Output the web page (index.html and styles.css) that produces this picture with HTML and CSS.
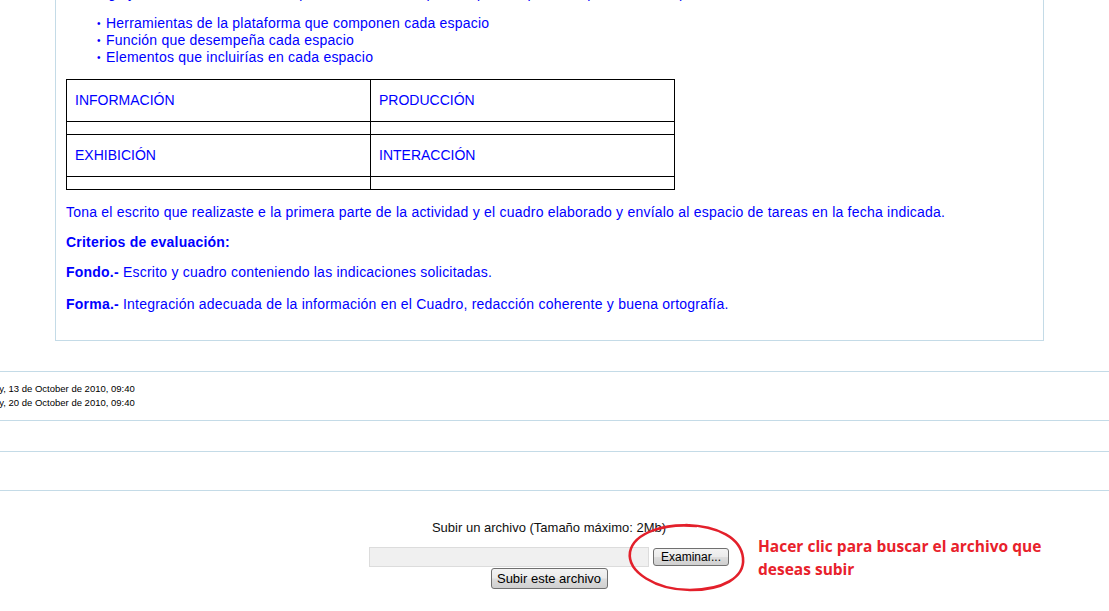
FILE: index.html
```html
<!DOCTYPE html>
<html lang="es">
<head>
<meta charset="utf-8">
<title>Tarea</title>
<link rel="stylesheet" href="styles.css">
</head>
<body>
<div class="box">
  <p class="intro">Investiga y elabora un escrito en el que describas los espacios que componen la plataforma, especificando:</p>
  <ul class="list">
    <li>Herramientas de la plataforma que componen cada espacio</li>
    <li>Función que desempeña cada espacio</li>
    <li>Elementos que incluirías en cada espacio</li>
  </ul>
  <table class="grid">
    <colgroup><col class="c1"><col class="c2"></colgroup>
    <tr class="tall"><td>INFORMACIÓN</td><td>PRODUCCIÓN</td></tr>
    <tr class="short"><td></td><td></td></tr>
    <tr class="tall"><td>EXHIBICIÓN</td><td>INTERACCIÓN</td></tr>
    <tr class="short"><td></td><td></td></tr>
  </table>
  <p>Tona el escrito que realizaste e la primera parte de la actividad y el cuadro elaborado y envíalo al espacio de tareas en la fecha indicada.</p>
  <p><b>Criterios de evaluación:</b></p>
  <p class="fondo"><b>Fondo.-</b> Escrito y cuadro conteniendo las indicaciones solicitadas.</p>
  <p class="last"><b>Forma.-</b> Integración adecuada de la información en el Cuadro, redacción coherente y buena ortografía.</p>
</div>

<div class="rows">
  <div class="row dates">
    <div class="date">Wednesday, 13 de October de 2010, 09:40</div>
    <div class="date">Wednesday, 20 de October de 2010, 09:40</div>
  </div>
  <div class="row r2"></div>
  <div class="row r3"></div>
</div>

<div class="upload">
  <div class="label">Subir un archivo (Tamaño máximo: 2Mb)</div>
  <div class="filerow">
    <span class="field"></span>
    <button class="btn browse" type="button">Examinar...</button>
  </div>
  <button class="btn submit" type="button">Subir este archivo</button>
</div>

<div class="note">
  <svg class="ring" width="124" height="72" viewBox="0 0 124 72">
    <path d="M70 4 C 40 1, 8 10, 4 30 C 1 50, 30 68, 64 68 C 96 68, 119 56, 117 36 C 115 16, 92 4, 60 3" fill="none" stroke="#e3202b" stroke-width="2.6" stroke-linecap="round"/>
  </svg>
  <p class="hint">Hacer clic para buscar el archivo que<br>deseas subir</p>
</div>
</body>
</html>
```

FILE: styles.css
```css
html, body {
  margin: 0;
  padding: 0;
  background: #ffffff;
  overflow: hidden;
}

body {
  font-family: "Liberation Sans", Arial, sans-serif;
  width: 1109px;
  height: 611px;
  position: relative;
}

.box {
  box-sizing: border-box;
  width: 989px;
  margin-left: 55px;
  border: 1px solid #c4dbe7;
  border-top: 0;
  padding: 0 10px 27px 10px;
  color: #0000ff;
  font-size: 14px;
  line-height: 17px;
  letter-spacing: 0.22px;
}

.box p {
  margin: 0 0 13px;
}

.box p.intro {
  margin: -15px 0 13px;
}

.box p.fondo {
  margin-bottom: 15px;
}

.box p.last {
  margin-bottom: 0;
}

.list {
  list-style: none;
  margin: 0 0 13px;
  padding-left: 31px;
}

.list li::before {
  content: "\2022";
  display: inline-block;
  width: 9px;
  font-size: 10px;
  vertical-align: top;
  line-height: 17px;
}

.grid {
  border-collapse: collapse;
  table-layout: fixed;
  width: 608px;
  margin: 0 0 14px;
  letter-spacing: 0;
}

.grid .c1 { width: 304px; }
.grid .c2 { width: 304px; }

.grid td {
  border: 1px solid #000;
  padding: 0 8px;
  color: #0000ff;
}

.grid .tall td {
  height: 41px;
}

.grid .short td {
  height: 12px;
}

.rows {
  margin-top: 30px;
  border-bottom: 1px solid #c4dbe7;
}

.row {
  border-top: 1px solid #c4dbe7;
}

.dates {
  padding: 10px 0 10px;
  font-size: 9.5px;
  line-height: 14px;
  color: #000;
}

.date {
  margin-left: -46px;
  white-space: nowrap;
}

.r2 { height: 30px; }
.r3 { height: 38px; }

.upload {
  padding: 29px 11px 0 0;
  display: flex;
  flex-direction: column;
  align-items: center;
  font-size: 13px;
  color: #111;
}

.label {
  line-height: 16px;
}

.filerow {
  display: flex;
  align-items: center;
  gap: 4px;
  margin-top: 11px;
}

.field {
  display: block;
  width: 280px;
  height: 20px;
  box-sizing: border-box;
  background: #f0f0f0;
  border: 1px solid #dcdcdc;
}

.btn {
  box-sizing: border-box;
  border: 1px solid #707070;
  border-radius: 3px;
  background: linear-gradient(#f3f3f3 0%, #ebebeb 48%, #dddddd 52%, #cfcfcf 100%);
  font-family: "Liberation Sans", Arial, sans-serif;
  color: #000;
  padding: 0;
  margin: 0;
}

.browse {
  width: 76px;
  height: 18px;
  font-size: 12px;
  line-height: 16px;
}

.submit {
  width: 117px;
  height: 21px;
  font-size: 13px;
  line-height: 19px;
  margin-top: 1px;
}

.note {
  position: absolute;
  left: 626px;
  top: 522px;
  display: flex;
  align-items: flex-start;
}

.ring {
  display: block;
}

.hint {
  margin: 13px 0 0 8px;
  font-family: "Open Sans", Lato, sans-serif;
  font-weight: 700;
  font-size: 15.5px;
  line-height: 23px;
  color: #e8212b;
  letter-spacing: 0;
  white-space: nowrap;
}
```
